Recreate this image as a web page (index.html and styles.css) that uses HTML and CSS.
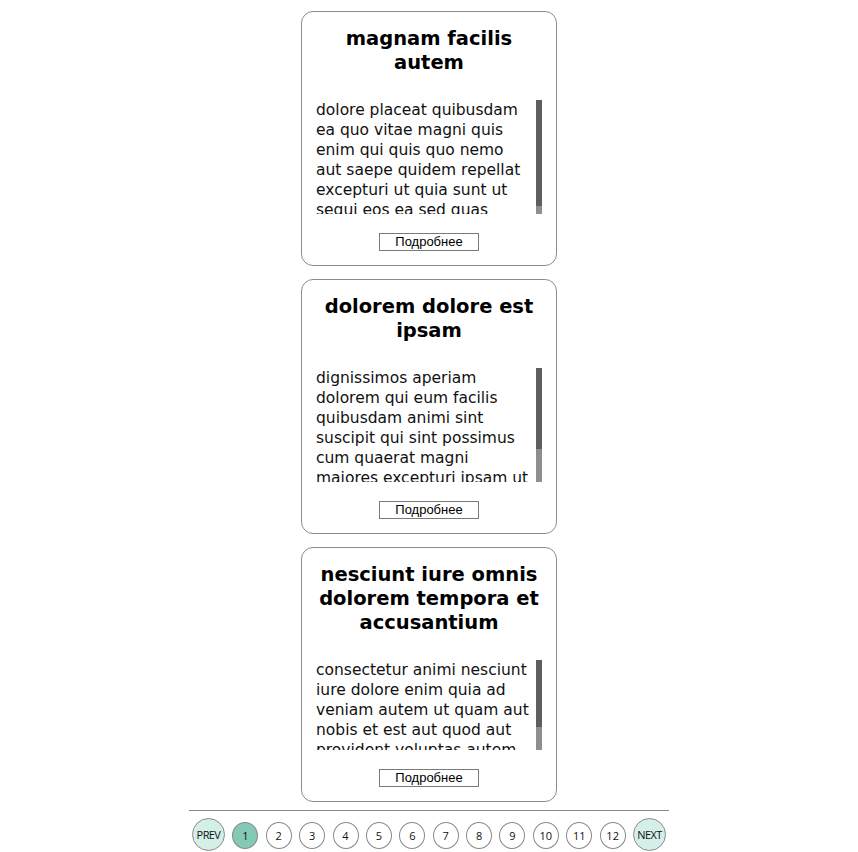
FILE: index.html
```html
<!DOCTYPE html>
<html lang="ru">
<head>
<meta charset="utf-8">
<title>Posts</title>
<link rel="stylesheet" href="styles.css">
</head>
<body>
<main class="page">
  <section class="cards">
    <article class="card">
      <h2 class="card-title">magnam facilis autem</h2>
      <div class="card-body">
        <div class="card-text">dolore placeat quibusdam ea quo vitae magni quis enim qui quis quo nemo aut saepe quidem repellat excepturi ut quia sunt ut sequi eos ea sed quas</div>
        <div class="scrollbar"><div class="thumb" style="height: 93%"></div></div>
      </div>
      <button class="card-btn">Подробнее</button>
    </article>
    <article class="card">
      <h2 class="card-title">dolorem dolore est ipsam</h2>
      <div class="card-body">
        <div class="card-text">dignissimos aperiam dolorem qui eum facilis quibusdam animi sint suscipit qui sint possimus cum quaerat magni maiores excepturi ipsam ut commodi dolor voluptatum modi aut vitae</div>
        <div class="scrollbar"><div class="thumb" style="height: 71%"></div></div>
      </div>
      <button class="card-btn">Подробнее</button>
    </article>
    <article class="card">
      <h2 class="card-title">nesciunt iure omnis dolorem tempora et accusantium</h2>
      <div class="card-body">
        <div class="card-text">consectetur animi nesciunt iure dolore enim quia ad veniam autem ut quam aut nobis et est aut quod aut provident voluptas autem voluptas</div>
        <div class="scrollbar"><div class="thumb" style="height: 74%"></div></div>
      </div>
      <button class="card-btn">Подробнее</button>
    </article>
  </section>
  <nav class="pager">
    <span class="pg pg-edge">PREV</span>
    <span class="pg pg-active">1</span>
    <span class="pg">2</span>
    <span class="pg">3</span>
    <span class="pg">4</span>
    <span class="pg">5</span>
    <span class="pg">6</span>
    <span class="pg">7</span>
    <span class="pg">8</span>
    <span class="pg">9</span>
    <span class="pg">10</span>
    <span class="pg">11</span>
    <span class="pg">12</span>
    <span class="pg pg-edge">NEXT</span>
  </nav>
</main>
</body>
</html>
```

FILE: styles.css
```css
html, body {
  margin: 0;
  padding: 0;
  background: #fff;
}

.page {
  display: flex;
  flex-direction: column;
  align-items: center;
  padding-top: 11px;
}

.cards {
  display: flex;
  flex-direction: column;
  gap: 13px;
}

.card {
  box-sizing: border-box;
  width: 256px;
  height: 255px;
  border: 1px solid #8c8c8c;
  border-radius: 12px;
  padding: 15px 14px 14px;
  display: flex;
  flex-direction: column;
  align-items: center;
  font-family: "DejaVu Sans", Verdana, sans-serif;
  color: #000;
}

.card-title {
  margin: 0 0 25px;
  font-size: 19.5px;
  font-weight: bold;
  line-height: 24px;
  text-align: center;
  width: 100%;
}

.card-body {
  align-self: stretch;
  flex: 1;
  min-height: 0;
  display: flex;
}

.card-text {
  flex: 1;
  min-width: 0;
  overflow: hidden;
  font-size: 15.5px;
  line-height: 20px;
  color: #111;
  padding-right: 4px;
}

.scrollbar {
  width: 6px;
  flex-shrink: 0;
  background: #8e8e8e;
  display: flex;
  flex-direction: column;
}

.thumb {
  background: #5e5e5e;
}

.card-btn {
  margin-top: 19px;
  box-sizing: border-box;
  width: 100px;
  height: 18px;
  padding: 0;
  background: #fff;
  border: 1px solid #7a7a7a;
  border-radius: 0;
  font-family: "Liberation Sans", Arial, sans-serif;
  font-size: 13px;
  line-height: 16px;
  color: #000;
  flex-shrink: 0;
}

.pager {
  box-sizing: border-box;
  width: 480px;
  margin-top: 8px;
  border-top: 1px solid #8c8c8c;
  padding-top: 7px;
  display: flex;
  justify-content: center;
  align-items: flex-start;
  gap: 7.4px;
  font-family: "Open Sans", "Noto Sans", sans-serif;
  font-size: 11px;
  color: #111;
}

.pg {
  box-sizing: border-box;
  width: 26px;
  height: 27px;
  line-height: 25px;
  margin-top: 4px;
  border: 1px solid #8a8a8a;
  border-radius: 50%;
  text-align: center;
  background: #fff;
}

.pg-edge {
  width: 33px;
  height: 33px;
  line-height: 31px;
  margin-top: 0;
  background: #d3efe8;
  letter-spacing: -0.6px;
}

.pg-active {
  background: #84c9b5;
}
```
